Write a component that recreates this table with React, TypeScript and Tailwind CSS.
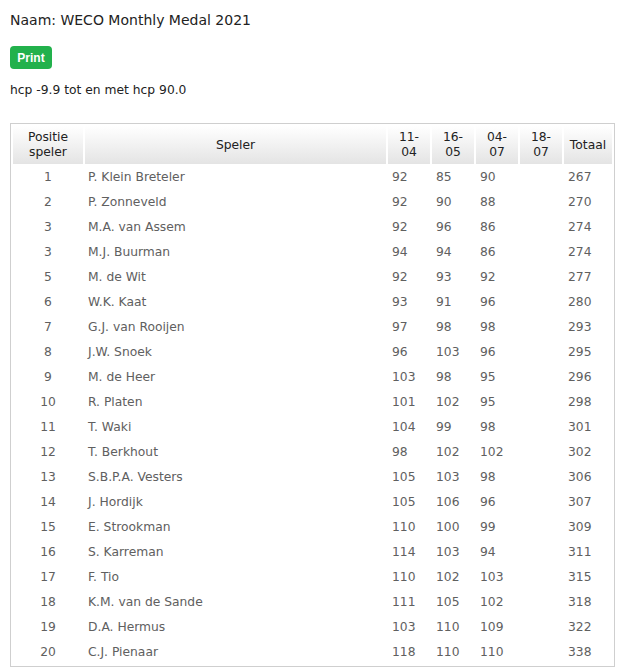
const dates = ["11-04", "16-05", "04-07", "18-07"];

type Row = { pos: number; name: string; scores: (number | null)[]; total: number };

const rows: Row[] = [
  { pos: 1, name: "P. Klein Breteler", scores: [92, 85, 90, null], total: 267 },
  { pos: 2, name: "P. Zonneveld", scores: [92, 90, 88, null], total: 270 },
  { pos: 3, name: "M.A. van Assem", scores: [92, 96, 86, null], total: 274 },
  { pos: 3, name: "M.J. Buurman", scores: [94, 94, 86, null], total: 274 },
  { pos: 5, name: "M. de Wit", scores: [92, 93, 92, null], total: 277 },
  { pos: 6, name: "W.K. Kaat", scores: [93, 91, 96, null], total: 280 },
  { pos: 7, name: "G.J. van Rooijen", scores: [97, 98, 98, null], total: 293 },
  { pos: 8, name: "J.W. Snoek", scores: [96, 103, 96, null], total: 295 },
  { pos: 9, name: "M. de Heer", scores: [103, 98, 95, null], total: 296 },
  { pos: 10, name: "R. Platen", scores: [101, 102, 95, null], total: 298 },
  { pos: 11, name: "T. Waki", scores: [104, 99, 98, null], total: 301 },
  { pos: 12, name: "T. Berkhout", scores: [98, 102, 102, null], total: 302 },
  { pos: 13, name: "S.B.P.A. Vesters", scores: [105, 103, 98, null], total: 306 },
  { pos: 14, name: "J. Hordijk", scores: [105, 106, 96, null], total: 307 },
  { pos: 15, name: "E. Strookman", scores: [110, 100, 99, null], total: 309 },
  { pos: 16, name: "S. Karreman", scores: [114, 103, 94, null], total: 311 },
  { pos: 17, name: "F. Tio", scores: [110, 102, 103, null], total: 315 },
  { pos: 18, name: "K.M. van de Sande", scores: [111, 105, 102, null], total: 318 },
  { pos: 19, name: "D.A. Hermus", scores: [103, 110, 109, null], total: 322 },
  { pos: 20, name: "C.J. Pienaar", scores: [118, 110, 110, null], total: 338 },
];

const th = "bg-gradient-to-b from-white to-[#e4e4e4] font-normal text-[#222] leading-[15px] px-1 py-[4px]";

export default function App() {
  return (
    <div className="bg-white min-h-screen px-[10px] pt-[11px] font-['DejaVu_Sans',Verdana,sans-serif] text-[#222]">
      <h1 className="text-[14px] leading-[18px] font-normal">Naam: WECO Monthly Medal 2021</h1>

      <button
        type="button"
        className="mt-[17px] h-[23px] w-[42px] rounded-[4px] bg-[#22b14c] font-['Liberation_Sans',Arial,sans-serif] text-[12px] font-bold text-white"
      >
        Print
      </button>

      <p className="mt-[13px] text-[12.3px] leading-[16px]">hcp -9.9 tot en met hcp 90.0</p>

      <table className="mt-[25px] w-[605px] table-fixed border-separate border-spacing-[2px] border border-[#cfcfcf] text-[12.3px]">
        <colgroup>
          <col className="w-[70px]" />
          <col className="w-[301px]" />
          <col className="w-[42px]" />
          <col className="w-[42px]" />
          <col className="w-[42px]" />
          <col className="w-[42px]" />
          <col className="w-[48px]" />
        </colgroup>
        <thead>
          <tr>
            <th className={th}>
              Positie
              <br />
              speler
            </th>
            <th className={th}>Speler</th>
            {dates.map((d) => (
              <th key={d} className={th}>
                {d.slice(0, 3)}
                <br />
                {d.slice(3)}
              </th>
            ))}
            <th className={th}>Totaal</th>
          </tr>
        </thead>
        <tbody className="text-[#606060]">
          {rows.map((r, i) => (
            <tr key={i} className="h-[23px]">
              <td className="text-center">{r.pos}</td>
              <td className="px-[3px]">{r.name}</td>
              {r.scores.map((s, j) => (
                <td key={j} className="px-1">
                  {s ?? ""}
                </td>
              ))}
              <td className="px-1">{r.total}</td>
            </tr>
          ))}
        </tbody>
      </table>
    </div>
  );
}
